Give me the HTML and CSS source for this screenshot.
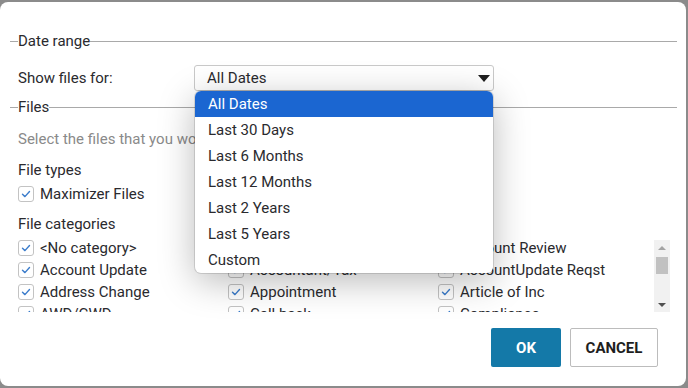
FILE: index.html
```html
<!DOCTYPE html>
<html>
<head>
<meta charset="utf-8">
<link rel="stylesheet" href="styles.css">
</head>
<body>
<div class="dialog">
  <div class="section-title">Date range</div>
  <div class="field-row">
    <span class="field-label">Show files for:</span>
    <div class="select-wrap">
      <div class="select"><span>All Dates</span><span class="caret"></span></div>
      <ul class="menu">
        <li class="selected">All Dates</li>
        <li>Last 30 Days</li>
        <li>Last 6 Months</li>
        <li>Last 12 Months</li>
        <li>Last 2 Years</li>
        <li>Last 5 Years</li>
        <li>Custom</li>
      </ul>
    </div>
  </div>
  <div class="section-title files">Files</div>
  <p class="hint">Select the files that you would like to include in the export.</p>
  <div class="group-title">File types</div>
  <label class="check single"><span class="box"><svg viewBox="0 0 16 16" width="16" height="16"><path d="M4 8.3 L6.8 11 L12 5.2" fill="none" stroke="#3b7ccb" stroke-width="1.6" stroke-linecap="round" stroke-linejoin="round"/></svg></span>Maximizer Files</label>
  <div class="group-title">File categories</div>
  <div class="cat-list">
    <div class="cat-view">
      <div class="cat-grid" id="grid"></div>
    </div>
    <div class="scrollbar">
      <div class="sb-btn"><span class="sb-up"></span></div>
      <div class="sb-track"><div class="sb-thumb"></div></div>
      <div class="sb-btn"><span class="sb-down"></span></div>
    </div>
  </div>
  <div class="actions">
    <button class="btn btn-primary">OK</button>
    <button class="btn btn-secondary">CANCEL</button>
  </div>
</div>
<script>
  var cats = ["<No category>","Account Opening","Account Review","Account Update","Accountant/Tax","AccountUpdate Reqst","Address Change","Appointment","Article of Inc","AWD/CWD","Call back","Compliance","Contract","Correspondence","Credit Card","Estate Planning","Financial Plan","Insurance","Investment","Meeting Notes","Personal","Referral","Statement","Tax Return","Transfer","Will"];
  var g = document.getElementById('grid');
  cats.forEach(function (c) {
    var l = document.createElement('label');
    l.className = 'check';
    l.innerHTML = '<span class="box"><svg viewBox="0 0 16 16" width="16" height="16"><path d="M4 8.3 L6.8 11 L12 5.2" fill="none" stroke="#3b7ccb" stroke-width="1.6" stroke-linecap="round" stroke-linejoin="round"/></svg></span>';
    l.appendChild(document.createTextNode(c));
    g.appendChild(l);
  });
</script>
</body>
</html>
```

FILE: styles.css
```css
html, body {
  margin: 0;
  padding: 0;
}
body {
  background: #8b8b8b;
  font-family: Roboto, "Liberation Sans", sans-serif;
  font-size: 15px;
  color: #2a2a2e;
}
.dialog {
  margin-top: 2px;
  width: 686px;
  height: 384px;
  box-sizing: border-box;
  background: #fff;
  border-radius: 8px;
  padding: 29px 9px 0 10px;
  display: flex;
  flex-direction: column;
}
.section-title {
  display: flex;
  align-items: center;
  height: 20px;
  line-height: 20px;
  white-space: nowrap;
}
.section-title::before {
  content: "";
  width: 8px;
  height: 1px;
  background: #a9a9a9;
}
.section-title::after {
  content: "";
  flex: 1;
  height: 1px;
  background: #a9a9a9;
}
.section-title.files {
  margin-top: 6px;
}
.field-row {
  display: flex;
  align-items: center;
  margin-top: 14px;
  padding-left: 8px;
  height: 26px;
}
.field-label {
  width: 176px;
}
.select-wrap {
  position: relative;
}
.select {
  box-sizing: border-box;
  width: 300px;
  height: 26px;
  border: 1px solid #c9c9c9;
  border-radius: 3px;
  display: flex;
  align-items: center;
  justify-content: space-between;
  padding: 0 3px 0 12px;
}
.caret {
  width: 0;
  height: 0;
  border-left: 6px solid transparent;
  border-right: 6px solid transparent;
  border-top: 7px solid #1e1e1e;
}
.menu {
  position: absolute;
  top: 26px;
  left: 1px;
  width: 298px;
  margin: 0;
  padding: 0;
  list-style: none;
  background: #fff;
  border-radius: 6px;
  overflow: hidden;
  z-index: 5;
  box-shadow: 0 0 0 1px rgba(0, 0, 0, 0.12), 0 8px 36px rgba(0, 0, 0, 0.28);
}
.menu li {
  height: 26px;
  line-height: 26px;
  padding-left: 13px;
}
.menu li.selected {
  background: #1b66d1;
  color: #fff;
}
.hint {
  margin: 12px 0 0;
  padding-left: 8px;
  height: 20px;
  line-height: 20px;
  color: #8a8a8a;
  white-space: nowrap;
  overflow: hidden;
}
.group-title {
  margin-top: 11px;
  padding-left: 8px;
  height: 20px;
  line-height: 20px;
}
.check {
  display: flex;
  align-items: center;
  gap: 6px;
  height: 22px;
  white-space: nowrap;
}
.check.single {
  margin-top: 3px;
  padding-left: 8px;
}
.check.single + .group-title {
  margin-top: 9px;
}
.box {
  box-sizing: border-box;
  width: 16px;
  height: 16px;
  border: 1px solid #c3c3c3;
  border-radius: 3px;
  display: flex;
  align-items: center;
  justify-content: center;
  flex: none;
}
.box svg {
  display: block;
  width: 14px;
  height: 14px;
}
.cat-list {
  margin-top: 3px;
  margin-left: 8px;
  width: 652px;
  height: 75px;
  display: flex;
}
.cat-view {
  flex: 1;
  overflow: hidden;
}
.cat-grid {
  display: grid;
  grid-template-columns: repeat(3, 210px);
  grid-auto-rows: 22px;
}
.scrollbar {
  width: 16px;
  margin-top: 3px;
  background: #f1f1f1;
  display: flex;
  flex-direction: column;
}
.sb-btn {
  height: 15px;
  display: flex;
  align-items: center;
  justify-content: center;
  flex: none;
}
.sb-up {
  width: 0;
  height: 0;
  border-left: 4px solid transparent;
  border-right: 4px solid transparent;
  border-bottom: 4px solid #a3a3a3;
}
.sb-down {
  width: 0;
  height: 0;
  border-left: 4px solid transparent;
  border-right: 4px solid transparent;
  border-top: 4px solid #505050;
}
.sb-track {
  flex: 1;
  padding: 2px 2px 0 2px;
}
.sb-thumb {
  height: 17px;
  background: #c1c1c1;
}
.actions {
  margin-top: 16px;
  display: flex;
  justify-content: flex-end;
  gap: 9px;
  padding-right: 19px;
}
.btn {
  height: 39px;
  font-family: Roboto, "Liberation Sans", sans-serif;
  font-size: 15px;
  font-weight: 700;
  border-radius: 2px;
  cursor: pointer;
}
.btn-primary {
  min-width: 70px;
  background: #1479a8;
  color: #fff;
  border: none;
}
.btn-secondary {
  width: 88px;
  background: #fff;
  color: #1e1e1e;
  border: 1px solid #bcbcbc;
}
```
